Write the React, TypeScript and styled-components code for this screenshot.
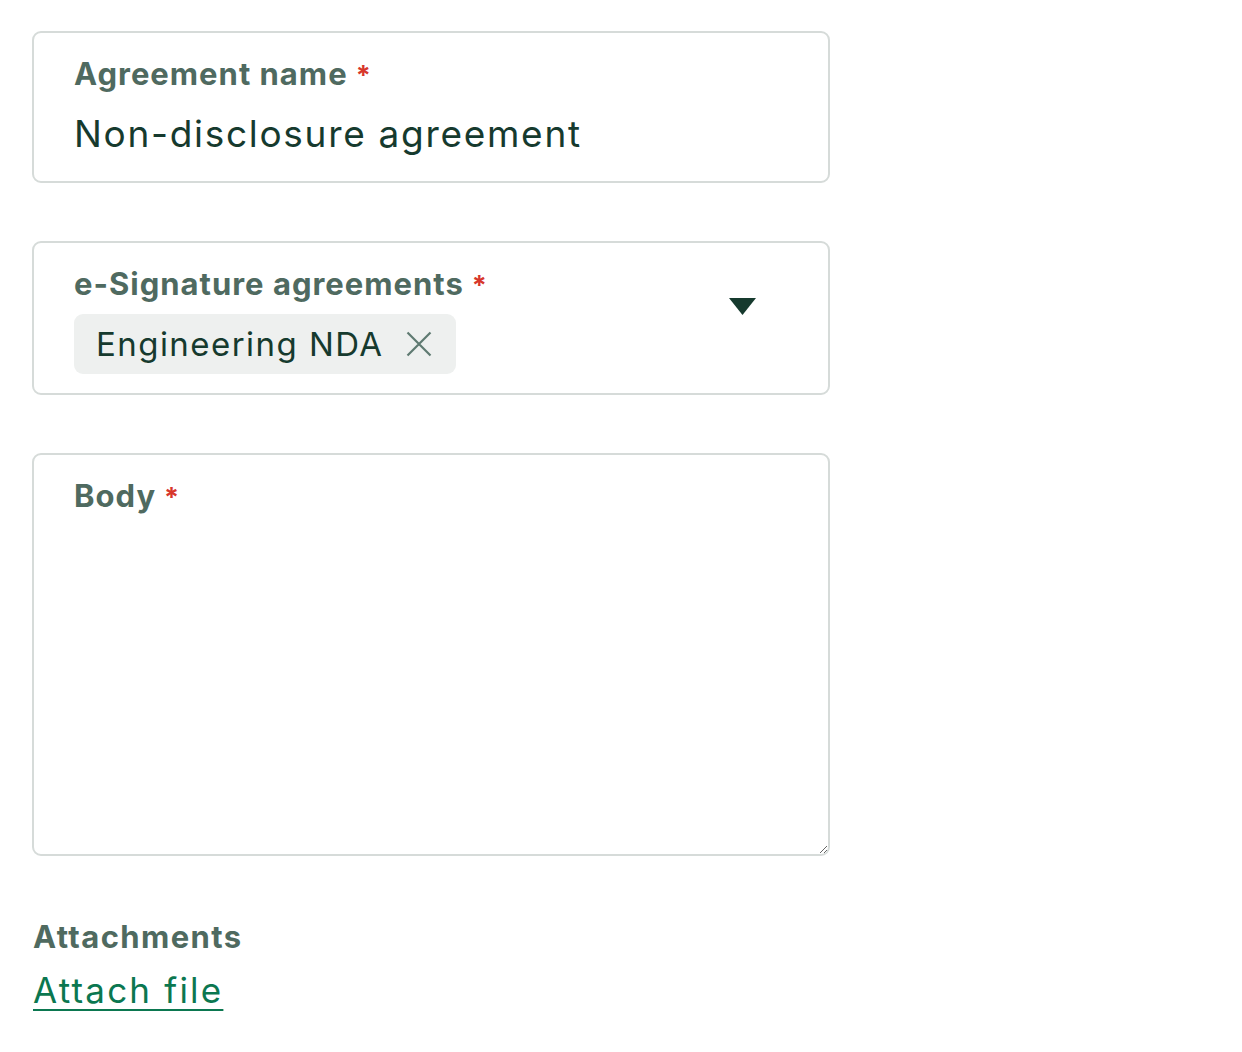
import { createGlobalStyle, styled } from 'styled-components'

const GlobalStyle = createGlobalStyle`
    body {
        margin: 0;
        background: #ffffff;
        font-family: 'Inter', 'Liberation Sans', sans-serif;
    }
`

function Required() {
    return <Star>*</Star>
}

function App() {
    return (
        <Page>
            <GlobalStyle />
            <Field>
                <Label>
                    Agreement name
                    <Required />
                </Label>
                <Value>Non-disclosure agreement</Value>
            </Field>

            <SelectField>
                <SelectBody>
                    <Label>
                        e-Signature agreements
                        <Required />
                    </Label>
                    <Chips>
                        <Chip>
                            Engineering NDA
                            <ChipRemove aria-label="Remove">
                                <svg width="26" height="26" viewBox="0 0 26 26">
                                    <path
                                        d="M1.5 1.5 L24.5 24.5 M24.5 1.5 L1.5 24.5"
                                        stroke="currentColor"
                                        strokeWidth="2.2"
                                        fill="none"
                                    />
                                </svg>
                            </ChipRemove>
                        </Chip>
                    </Chips>
                </SelectBody>
                <Caret>
                    <svg width="27" height="17" viewBox="0 0 27 17">
                        <path d="M0 0 H27 L13.5 17 Z" fill="currentColor" />
                    </svg>
                </Caret>
            </SelectField>

            <TextAreaField>
                <FloatingLabel>
                    Body
                    <Required />
                </FloatingLabel>
                <TextArea />
            </TextAreaField>

            <Attachments>
                <PlainLabel>Attachments</PlainLabel>
                <AttachLink href="#">Attach file</AttachLink>
            </Attachments>
        </Page>
    )
}

export default App

const Page = styled.div`
    display: flex;
    flex-direction: column;
    align-items: flex-start;
    gap: 58px;
    padding: 31px 0 0 32px;
    width: 798px;
`

const Field = styled.div`
    box-sizing: border-box;
    width: 798px;
    height: 152px;
    border: 2px solid #d6dbd9;
    border-radius: 9px;
    padding: 23px 40px 0 40px;
    display: flex;
    flex-direction: column;
    gap: 18px;
`

const Label = styled.div`
    font-size: 31px;
    font-weight: 700;
    line-height: 36px;
    color: #4f6a60;
    letter-spacing: 1px;
    white-space: nowrap;
`

const Star = styled.span`
    color: #d7372b;
    margin-left: 8px;
    font-size: 27px;
`

const Value = styled.div`
    font-size: 37px;
    line-height: 44px;
    color: #163a2e;
    letter-spacing: 1.7px;
`

const SelectField = styled(Field)`
    height: 154px;
    flex-direction: row;
    align-items: flex-start;
    justify-content: space-between;
    padding-right: 72px;
`

const SelectBody = styled.div`
    display: flex;
    flex-direction: column;
    gap: 10px;
`

const Chips = styled.div`
    display: flex;
    gap: 8px;
`

const Chip = styled.div`
    display: flex;
    align-items: center;
    gap: 22px;
    height: 60px;
    padding: 0 24px 0 22px;
    border-radius: 9px;
    background: #eef0ef;
    font-size: 33px;
    color: #163a2e;
    letter-spacing: 1.45px;
`

const ChipRemove = styled.span`
    display: flex;
    color: #5f7a71;
`

const Caret = styled.div`
    display: flex;
    margin-top: 32px;
    color: #163a2e;
`

const TextAreaField = styled.div`
    position: relative;
    width: 798px;
    display: flex;
`

const FloatingLabel = styled(Label)`
    position: absolute;
    top: 25px;
    left: 42px;
`

const TextArea = styled.textarea`
    box-sizing: border-box;
    width: 798px;
    height: 403px;
    border: 2px solid #d6dbd9;
    border-radius: 9px;
    padding: 80px 40px 20px;
    font-family: inherit;
    font-size: 34px;
    color: #163a2e;
    resize: vertical;
    outline: none;
`

const Attachments = styled.div`
    display: flex;
    flex-direction: column;
    gap: 14px;
    margin-top: 5px;
    padding-left: 1px;
`

const PlainLabel = styled(Label)`
    letter-spacing: 1.4px;
`

const AttachLink = styled.a`
    font-size: 35px;
    line-height: 42px;
    color: #0b7750;
    letter-spacing: 2.2px;
    text-decoration: underline;
    text-underline-offset: 6px;
    text-decoration-thickness: 3px;
`
